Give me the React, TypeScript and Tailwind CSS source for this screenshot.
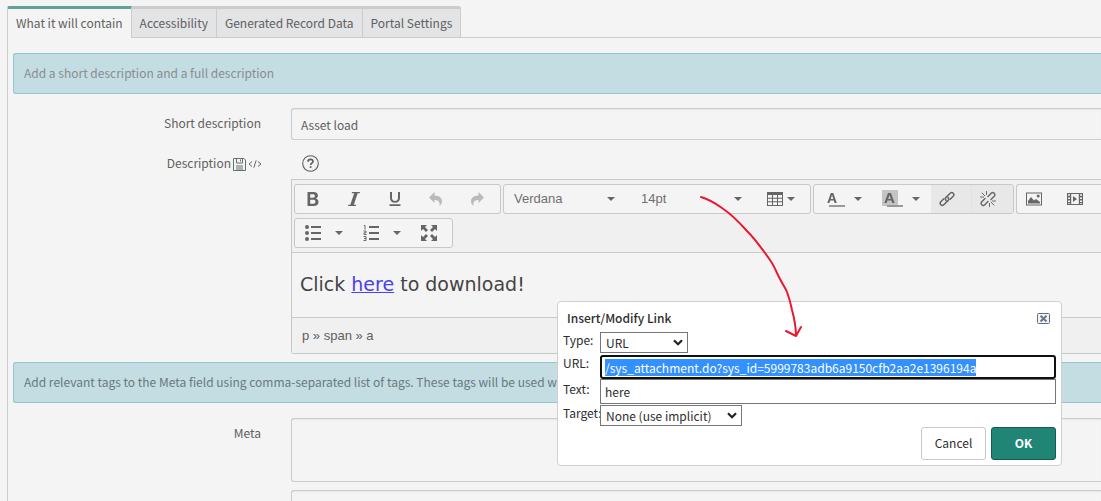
import { useEffect, useRef } from "react";
import type { ReactNode } from "react";

const tabs = ["What it will contain", "Accessibility", "Generated Record Data", "Portal Settings"];

function Caret() {
  return (
    <svg viewBox="0 0 8 4" className="h-1 w-2 shrink-0 fill-[#666]" aria-hidden="true">
      <path d="M0 0h8L4 4z" />
    </svg>
  );
}

function Icon({ children, className = "" }: { children: ReactNode; className?: string }) {
  return (
    <svg viewBox="0 0 16 16" className={`h-4 w-4 shrink-0 ${className}`} fill="#666" aria-hidden="true">
      {children}
    </svg>
  );
}

function ToolGroup({ label, children, className = "rounded-[3px] border" }: { label: string; children: ReactNode; className?: string }) {
  return (
    <div role="group" aria-label={label} className={`flex h-[30px] shrink-0 overflow-hidden border-[#c8c8c8] bg-[#f4f4f4] ${className}`}>
      {children}
    </div>
  );
}

function Tool({ label, children, className = "w-[41px] pl-[10px]" }: { label: string; children: ReactNode; className?: string }) {
  return (
    <button type="button" aria-label={label} className={`flex shrink-0 items-center ${className}`}>
      {children}
    </button>
  );
}

function ToolSelect({ label, value }: { label: string; value: string }) {
  return (
    <div className="grid w-[127px] grid-cols-1 items-center">
      <select aria-label={label} className="col-start-1 row-start-1 h-full appearance-none pl-[10px] font-['Liberation_Sans',sans-serif] text-[13px] text-[#707070]">
        <option>{value}</option>
      </select>
      <div className="pointer-events-none col-start-1 row-start-1 justify-self-end pr-4">
        <Caret />
      </div>
    </div>
  );
}

function Notice({ children, className }: { children: ReactNode; className: string }) {
  return (
    <div className={`ml-[5px] h-[41px] rounded-l-[3px] border border-r-0 border-[#91c6d0] bg-[#c3dde3] px-[10px] leading-[38px] whitespace-nowrap ${className}`}>
      {children}
    </div>
  );
}

function DialogSelect({ id, value, className }: { id: string; value: string; className: string }) {
  return (
    <div className={`grid h-[21px] items-center border border-[#767676] ${className}`}>
      <select id={id} className="col-start-1 row-start-1 h-full appearance-none pl-[5px] leading-[19px]">
        <option>{value}</option>
      </select>
      <svg viewBox="0 0 10 7" className="pointer-events-none col-start-1 row-start-1 mr-1 h-[7px] w-[10px] justify-self-end" fill="none" stroke="#222" strokeWidth="2.2" aria-hidden="true">
        <path d="M1 1.2l4 4 4-4" />
      </svg>
    </div>
  );
}

function LinkDialog() {
  const urlRef = useRef<HTMLInputElement>(null);
  useEffect(() => {
    urlRef.current?.focus();
    urlRef.current?.select();
  }, []);

  return (
    <div role="dialog" aria-labelledby="link-title" className="absolute top-[301px] left-[557px] w-[505px] rounded-[4px] border border-[#d0d0d0] bg-white px-[5px] pb-[5px] text-[#2e2e2e]">
      <div className="flex h-[30px] items-center justify-between pt-[2px] pr-[6px] pl-1">
        <h2 id="link-title" className="font-medium">Insert/Modify Link</h2>
        <button type="button" aria-label="Close">
          <svg viewBox="0 0 13 11" className="h-[11px] w-[13px]" fill="none" aria-hidden="true">
            <rect x="0.5" y="0.5" width="12" height="10" rx="1" fill="#f1f3f6" stroke="#5d6f82" />
            <path d="M3.5 2.7l6 5.8M9.5 2.7l-6 5.8" stroke="#6b7785" strokeWidth="1.9" />
          </svg>
        </button>
      </div>
      <div className="grid grid-cols-[37px_1fr]">
        <label htmlFor="link-type" className="h-[23px] leading-[16px]">Type:</label>
        <DialogSelect id="link-type" value="URL" className="w-[88px]" />
        <label htmlFor="link-url" className="h-6 leading-[16px]">URL:</label>
        <input
          id="link-url"
          ref={urlRef}
          defaultValue="/sys_attachment.do?sys_id=5999783adb6a9150cfb2aa2e1396194a"
          className="h-6 w-full rounded-[3px] border-2 border-[#101010] bg-white px-[3px] leading-[18px] text-[#2e2e2e] outline-none selection:bg-[#3390ff] selection:text-white"
        />
        <label htmlFor="link-text" className="h-[26px] leading-[19px]">Text:</label>
        <input id="link-text" defaultValue="here" className="h-[25px] w-full border border-[#767676] bg-white px-1 pb-px outline-none" />
        <label htmlFor="link-target" className="h-[22px] leading-[16px]">Target:</label>
        <DialogSelect id="link-target" value="None (use implicit)" className="w-[142px]" />
      </div>
      <div className="flex justify-end gap-[5px]">
        <button type="button" className="h-[33px] w-[65px] rounded-[3px] border border-[#c8c8c8] bg-white pb-[2px]">Cancel</button>
        <button type="button" className="h-[33px] w-[65px] rounded-[3px] border border-[#145c50] bg-[#218576] pb-[2px] font-bold text-white">OK</button>
      </div>
    </div>
  );
}

function Toolbar() {
  return (
    <div className="flex flex-col gap-1 border-b border-[#c8c8c8] bg-[#f0f0f0] py-1 pl-[2px]">
      <div className="flex gap-[2px]">
        <ToolGroup label="Formatting">
          <Tool label="Bold"><Icon><path fillRule="evenodd" d="M2.500 1h6.200c2.700 0 4.200 1.400 4.200 3.600 0 1.500-.8 2.500-2 3 1.600.4 2.600 1.600 2.600 3.400 0 2.600-1.800 4-4.700 4H2.500zM5.200 3.300v3.400h2.700c1.300 0 2-.6 2-1.700s-.7-1.700-2-1.700zm0 5.500v3.900h3.100c1.400 0 2.100-.7 2.100-2s-.8-1.900-2.200-1.900z" /></Icon></Tool>
          <Tool label="Italic"><Icon><path d="M6 1h8l-.3 1.300h-2L7.800 13.700h2.300L9.800 15H2l.3-1.300h2L8.200 2.300H5.700z" /></Icon></Tool>
          <Tool label="Underline"><Icon><path d="M3 1h2v5.800c0 2 1 3.200 3 3.200s3-1.200 3-3.200V1h2v6c0 3-1.900 4.700-5 4.700S3 10 3 7zM2.500 13.200h11V15h-11z" /></Icon></Tool>
          <Tool label="Undo"><Icon className="opacity-40"><path d="M6.500 1v3.500c5 .2 7.500 2.700 7.500 5.700 0 2-1 3.500-2.500 4.800.8-4-1-6-5-6V12L1 6.500z" /></Icon></Tool>
          <Tool label="Redo"><Icon className="opacity-40"><path d="M9.500 1v3.500C4.500 4.700 2 7.200 2 10.200c0 2 1 3.500 2.500 4.800-.8-4 1-6 5-6V12L15 6.500z" /></Icon></Tool>
        </ToolGroup>
        <ToolGroup label="Font and table">
          <ToolSelect label="Font family" value="Verdana" />
          <ToolSelect label="Font size" value="14pt" />
          <Tool label="Table" className="w-[52px] gap-1 pl-[9px]">
            <Icon><path fillRule="evenodd" d="M0 1h16v14H0zm1 3v2.700h4V4zm5 0v2.700h4V4zm5 0v2.700h4V4zM1 7.700v2.600h4V7.700zm5 0v2.600h4V7.700zm5 0v2.600h4V7.700zM1 11.300V14h4v-2.700zm5 0V14h4v-2.700zm5 0V14h4v-2.700z" /></Icon>
            <Caret />
          </Tool>
        </ToolGroup>
        <ToolGroup label="Colours and links">
          <Tool label="Text colour" className="w-[58px] gap-[9px] pl-[13px]">
            <svg viewBox="0 0 18 18" className="h-[18px] w-[18px]" aria-hidden="true">
              <path fill="#666" fillRule="evenodd" d="M3.800 3h2.500l3.500 10H7.600l-.8-2.400H3.200L2.400 13H.3zM5 5L3.800 9h2.500z" />
              <path fill="#999" d="M2 15h16v2H2z" />
            </svg>
            <Caret />
          </Tool>
          <Tool label="Background colour" className="w-[59px] gap-2 pl-[10px]">
            <svg viewBox="0 0 22 18" className="h-[18px] w-[22px]" aria-hidden="true">
              <path fill="#c4c4c4" d="M0 0h16v16H0z" />
              <path fill="#666" fillRule="evenodd" d="M6 3h3l3.600 10h-2.400l-.8-2.400H5.500L4.700 13H2.300zM7.500 5L6.100 9h2.700z" />
              <path fill="#999" d="M5 15h16v2H5z" />
            </svg>
            <Caret />
          </Tool>
          <Tool label="Insert link" className="w-[41px] border-r border-[#e2e2e2] bg-[#e8e8e8] pl-2">
            <Icon><g fill="none" stroke="#666" strokeWidth="1.500" strokeLinecap="round" strokeLinejoin="round"><path d="M7 9.400c-1-1-1-2 0-3l4.200-4.200c1-1 2-1 3 0s.9 2 0 3L11.200 8.200" /><path d="M9 6.600c1 1 1 2 0 3l-4.200 4.200c-1 1-2 1-3 0s-.9-2 0-3L4.800 7.800" /></g></Icon>
          </Tool>
          <Tool label="Remove link" className="w-[41px] bg-[#e8e8e8] pl-2">
            <Icon><g fill="none" stroke="#666" strokeWidth="1.400" strokeLinecap="round"><path d="M8 5.400l3.200-3.200c1-1 2-1 3 0s.9 2 0 3L11 8.400M8 10.600l-3.200 3.200c-1 1-2 1-3 0s-.9-2 0-3L5 7.600" /><path strokeWidth="1" d="M6.500.5v3M2 2l2.800 2.800M.5 6h3M12.500 10h3M11 11.200l3 2.800M9.500 12.500v3" /></g></Icon>
          </Tool>
        </ToolGroup>
        <ToolGroup label="Media" className="grow rounded-l-[3px] border border-r-0">
          <Tool label="Insert image" className="w-[41px] pl-[9px]"><Icon><path fillRule="evenodd" d="M0 1.500h16v13H0zm1 1v11h14v-11z" /><path d="M2 12.500V10l3-4 3 3.500 2-1.500 4 3v1.500z" /><circle cx="12.200" cy="5" r="1.500" /></Icon></Tool>
          <Tool label="Insert video" className="w-[41px] pl-[9px]"><Icon><path fillRule="evenodd" d="M0 2h16v12H0zm1 1.200v1.600h2V3.200zm0 3.200V8h2V6.400zm0 3v1.600h2V9.400zm0 2.800V13h2v-.8zM4.200 3v10h7.600V3zM13 3.200v1.600h2V3.200zm0 3.200V8h2V6.400zm0 3v1.600h2V9.400zm0 2.800V13h2v-.8z" /><path d="M6 5v6l4-3z" /></Icon></Tool>
        </ToolGroup>
      </div>
      <div className="flex">
        <ToolGroup label="Lists and view">
          <Tool label="Bulleted list" className="w-[58px] gap-[14px] pl-[10px]">
            <Icon><path d="M6 1h10v2H6zm0 6h10v2H6zm0 6h10v2H6z" /><circle cx="2" cy="2" r="2" /><circle cx="2" cy="8" r="2" /><circle cx="2" cy="14" r="2" /></Icon>
            <Caret />
          </Tool>
          <Tool label="Numbered list" className="w-[58px] gap-[14px] pl-[10px]">
            <Icon><path d="M6 1h10v2H6zm0 6h10v2H6zm0 6h10v2H6z" /><path fill="none" stroke="#666" d="M.8.500h1.200V4.500M.5 6h2.500v1.800H1v1.700h2.500M.5 11.500h2.500v4H.5M1 13.500h2" /></Icon>
            <Caret />
          </Tool>
          <Tool label="Full screen"><Icon><path d="M0 0h6L4 2l3 3-2 2-3-3-2 2zM16 0v6l-2-2-3 3-2-2 3-3-2-2zM0 16v-6l2 2 3-3 2 2-3 3 2 2zM16 16h-6l2-2-3-3 2-2 3 3 2-2z" /></Icon></Tool>
        </ToolGroup>
      </div>
    </div>
  );
}

export default function App() {
  return (
    <main className="relative h-screen overflow-hidden bg-[#f4f4f4] pt-[6px] pl-[7px] font-['Noto_Sans_CJK_SC',sans-serif] text-xs text-[#606060]">
      <div role="tablist" className="flex h-8">
        {tabs.map((tab, i) => (
          <button
            key={tab}
            type="button"
            role="tab"
            aria-selected={i === 0}
            className={
              i === 0
                ? "shrink-0 rounded-tl-[2px] border-t-[3px] border-r border-l border-t-[#5fa398] border-r-[#ccc] border-l-[#ccc] px-2 pb-px"
                : "shrink-0 border-t-[3px] border-r border-b border-[#ccc] bg-[#e3e4e6] px-2 last-of-type:rounded-tr-[3px]"
            }
          >
            {tab}
          </button>
        ))}
        <div className="grow border-b border-[#ccc]" />
      </div>

      <form className="border-l border-[#ccc] pt-[15px]">
        <Notice className="text-[#888d8f]">Add a short description and a full description</Notice>

        <div className="mt-[14px] grid grid-cols-[283px_1fr]">
          <label htmlFor="short-description" className="pr-[30px] text-right leading-[30px]">Short description</label>
          <input id="short-description" defaultValue="Asset load" className="h-8 w-full rounded-l-[3px] border border-r-0 border-[#ccc] px-[9px] shadow-[inset_0_1px_1px_#e6e6e6]" />
        </div>

        <div className="mt-[11px] grid grid-cols-[283px_1fr]">
          <div className="flex h-6 items-center justify-end pr-[29px]">
            <span id="description-label">Description</span>
            <svg viewBox="0 0 13 13" className="mt-[2px] ml-[2px] h-[13px] w-[13px]" fill="none" stroke="#65706e" aria-hidden="true">
              <path d="M.5.500h10.500l1.500 1.500v10.500H.5zM3.500.500v4.500h6V.500M3 8h7M3 10h7M3 12h7M7.500 1.500v2" />
            </svg>
            <svg viewBox="0 0 14 8" className="mt-[2px] ml-[2px] h-2 w-[14px]" fill="none" stroke="#666" aria-hidden="true">
              <path d="M4 1.500L1 4l3 2.500M10 1.500L13 4l-3 2.500M8.200 .3L5.800 7.700" />
            </svg>
          </div>
          <button type="button" aria-label="Help" className="ml-[11px] w-[17px]">
            <svg viewBox="0 0 17 17" className="h-[17px] w-[17px]" fill="none" stroke="#606060" aria-hidden="true">
              <circle cx="8.500" cy="8.500" r="7.800" strokeWidth="1.100" />
              <path d="M6 6.700C6 5.200 7 4.300 8.500 4.300s2.500.9 2.500 2.200c0 1.600-2.400 1.800-2.400 3.500" strokeWidth="1.700" />
              <path d="M8.600 11.200v1.700" strokeWidth="1.800" />
            </svg>
          </button>
        </div>

        <div className="mt-1 ml-[283px] rounded-bl-[3px] border border-r-0 border-[#c8c8c8]">
          <Toolbar />
          <div role="textbox" aria-labelledby="description-label" tabIndex={0} className="h-16 px-2 pt-4 font-['DejaVu_Sans',sans-serif] text-[19px] leading-[30px] text-[#444]">
            Click <a href="/sys_attachment.do?sys_id=5999783adb6a9150cfb2aa2e1396194a" className="text-[#4a42e8] underline">here</a> to download!
          </div>
          <div className="h-9 border-t border-[#c8c8c8] bg-[#f0f0f0] px-[10px] font-['Liberation_Sans',sans-serif] text-[13px] leading-[36px]">p » span » a</div>
        </div>

        <div className="mt-2">
          <Notice className="text-[#69797d]">Add relevant tags to the Meta field using comma-separated list of tags. These tags will be used while</Notice>
        </div>

        <div className="mt-[15px] grid grid-cols-[283px_1fr] gap-y-2">
          <label htmlFor="meta" className="pr-[30px] text-right leading-[30px]">Meta</label>
          <textarea id="meta" className="block h-16 w-full resize-none rounded-l-[3px] border border-r-0 border-[#ccc] shadow-[inset_0_1px_1px_#e6e6e6]" />
          <textarea aria-label="Notes" className="col-start-2 block h-16 w-full resize-none rounded-l-[3px] border border-r-0 border-[#ccc] shadow-[inset_0_1px_1px_#e6e6e6]" />
        </div>
      </form>

      <LinkDialog />

      <svg viewBox="0 0 110 150" className="pointer-events-none absolute top-[190px] left-[695px] h-[150px] w-[110px]" fill="none" stroke="#e8192f" strokeWidth="2" strokeLinecap="round" strokeLinejoin="round" aria-hidden="true">
        <path d="M6 7C13 9 20 13 27 18C36 24 44 32 52 41C61 50 68 60 75 70C80 77 82 84 85 89C88 95 91 99 92 102C95 110 96 115 97 120C100 131 101 139 101 146M91 141l10 5 5-9" />
      </svg>
    </main>
  );
}
